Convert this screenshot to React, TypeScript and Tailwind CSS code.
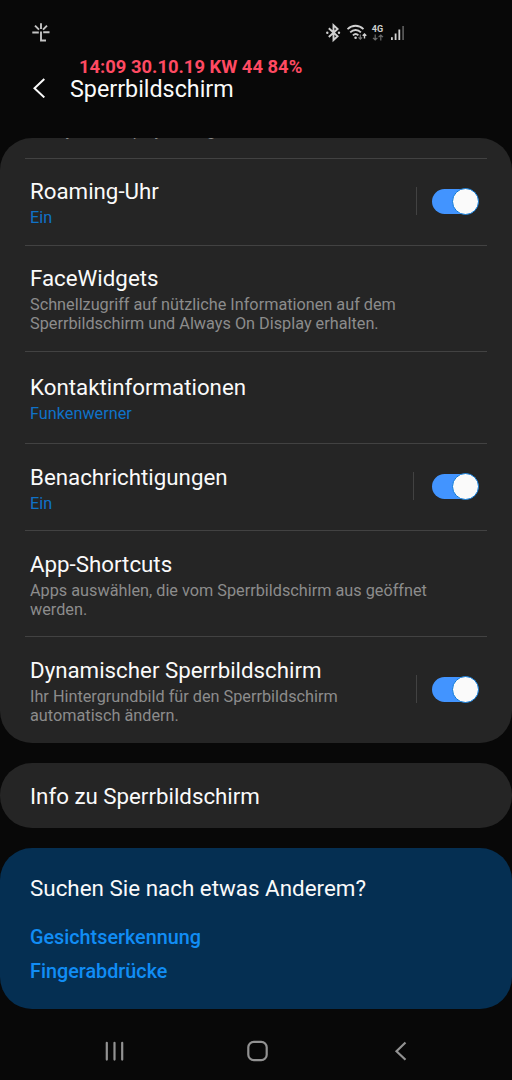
import type { ReactNode } from "react";

const StatusBar = () => {
    return (
        <div className="flex h-[57px] justify-between pt-[22px] pl-[31px] pr-[106px]">
            <svg width="20" height="20" viewBox="0 0 20 20" fill="none" stroke="#c4c4c4" strokeWidth="1.9">
                <path d="M10 1.2v5.8M4 3.7l4 4M16 3.7l-4 4M1.3 10.5h6.5M12.2 10.3h6.3M10 9.5v9h5" />
            </svg>
            <div className="flex gap-[5px]">
                <svg width="16" height="22" viewBox="0 0 16 22" fill="none" stroke="#d0d0d0" strokeWidth="1.9">
                    <path d="M2.8 6.3l8.800 8-4.100 3.700V3.200l4.100 3.800-8.800 8" />
                    <circle cx="1.3" cy="10.7" r="1.2" fill="#d0d0d0" stroke="none" />
                    <circle cx="13" cy="10.7" r="1.2" fill="#d0d0d0" stroke="none" />
                </svg>
                <svg width="21" height="22" viewBox="0 0 21 22" fill="none" stroke="#d0d0d0" strokeWidth="1.8">
                    <path d="M0.5 7.2c4.6-4.6 11.4-4.6 16 0M3.2 10.4c3.2-3.2 7.6-3.2 10.7 0M5.9 13.3c1.7-1.6 3.9-1.6 5.5 0" />
                    <circle cx="8.6" cy="15.8" r="1.3" fill="#d0d0d0" stroke="none" />
                    <path d="M13.3 12.5v4.5M11.5 15.3l1.8 1.8 1.8-1.8" stroke="#777" strokeWidth="1.2" />
                    <path d="M17.5 16.5v-4.5M15.7 13.8l1.8-1.8 1.8 1.8" strokeWidth="1.4" />
                </svg>
                <div className="-ml-[2px] mr-[2px] flex w-[13px] flex-col items-center">
                    <span className="mt-[2px] text-[9px] leading-[10px] font-bold text-[#d0d0d0]">4G</span>
                    <svg width="12" height="7" viewBox="0 0 12 7" fill="none" stroke="#6b6b6b" strokeWidth="1.2">
                        <path d="M3.2 0.5v5.5M1 3.8l2.2 2.2 2.2-2.2M8.8 6.5V1M6.6 3.2l2.2-2.2 2.2 2.2" />
                    </svg>
                </div>
                <svg width="15" height="22" viewBox="0 0 15 22" fill="#d0d0d0">
                    <rect x="0" y="15.2" width="1.8" height="2.8" />
                    <rect x="3.7" y="11.5" width="1.8" height="6.5" />
                    <rect x="7.4" y="7.5" width="1.8" height="10.5" />
                    <rect x="11.2" y="4" width="1.8" height="14" fill="#555" />
                </svg>
            </div>
        </div>
    )
}

const Toggle = () => {
    return (
        <button role="switch" aria-checked="true" className="mb-[2px] flex h-[25px] w-[46px] items-center justify-end rounded-full bg-[#4294ff]">
            <span className="-mr-px size-[27px] shrink-0 rounded-full border border-[#0b79d9] bg-[#fafafa]" />
        </button>
    )
}

type RowProps = {
    title: string;
    height: string;
    sub: ReactNode;
    active?: boolean;
    toggle?: boolean;
    toggleGap?: string;
    pad?: string;
}

const Row = ({ title, height, sub, active, toggle, toggleGap = "gap-[15px]", pad = "pt-[19px]" }: RowProps) => {
    return (
        <li className={`flex items-start justify-between border-t border-[#424242] pl-[5px] pr-[9px] ${height}`}>
            <div className={pad}>
                <h2 className="text-[22.3px] leading-[26px] whitespace-nowrap text-[#fafafa]">{title}</h2>
                <p className={`mt-[4px] text-[16.25px] leading-[19px] whitespace-nowrap ${active ? "text-[#0f72c8]" : "text-[#8c8c8c]"}`}>{sub}</p>
            </div>
            {toggle && (
                <div className={`flex h-full items-center ${toggleGap}`}>
                    <span className="mb-[2px] h-[28px] w-px bg-[#424242]" />
                    <Toggle />
                </div>
            )}
        </li>
    )
}

const App = () => {
    return (
        <div className="flex h-[1080px] w-[512px] flex-col overflow-hidden bg-[#080808] font-[Roboto,sans-serif]">
            <StatusBar />
            <header className="flex h-[81px] items-start pl-[32px]">
                <svg className="mt-[21px]" width="15" height="20" viewBox="0 0 15 20" fill="none" stroke="#fafafa" strokeWidth="2">
                    <path d="M12.3 1L2.5 10.2l9.8 9.2" />
                </svg>
                <div className="pl-[23px]">
                    <p className="pl-[9px] text-[18.4px] leading-[20px] font-bold whitespace-nowrap text-[#ff4a62]">14:09 30.10.19 KW 44 84%</p>
                    <h1 className="-mt-px text-[23.3px] leading-[27px] whitespace-nowrap text-[#fafafa]">Sperrbildschirm</h1>
                </div>
            </header>

            <main className="flex flex-col gap-[20px]">
                <section className="h-[605px] overflow-hidden rounded-[32px] bg-[#252525] px-[25px]">
                    <div className="flex h-[20px] items-start pl-[5px]">
                        <p className="-mt-[17px] text-[16.25px] leading-[19px] text-[#8c8c8c]">Always On Display festlegen.</p>
                    </div>
                    <ul>
                        <Row title="Roaming-Uhr" height="h-[87px]" sub="Ein" active toggle />
                        <Row
                            title="FaceWidgets"
                            height="h-[106px]"
                            sub={<>Schnellzugriff auf nützliche Informationen auf dem<br />Sperrbildschirm und Always On Display erhalten.</>}
                        />
                        <Row title="Kontaktinformationen" height="h-[92px]" sub="Funkenwerner" active pad="pt-[22px]" />
                        <Row title="Benachrichtigungen" height="h-[87px]" sub="Ein" active toggle toggleGap="gap-[18px]" pad="pt-[20px]" />
                        <Row
                            title="App-Shortcuts"
                            height="h-[106px]"
                            sub={<>Apps auswählen, die vom Sperrbildschirm aus geöffnet<br />werden.</>}
                            pad="pt-[20px]"
                        />
                        <Row
                            title="Dynamischer Sperrbildschirm"
                            height="h-[107px]"
                            sub={<>Ihr Hintergrundbild für den Sperrbildschirm<br />automatisch ändern.</>}
                            toggle
                            pad="pt-[20px]"
                        />
                    </ul>
                </section>

                <section className="flex h-[65px] items-center rounded-[32px] bg-[#252525] px-[30px]">
                    <h2 className="text-[22.3px] leading-[26px] text-[#fafafa]">Info zu Sperrbildschirm</h2>
                </section>

                <section className="flex h-[161px] flex-col rounded-[32px] bg-[#052f52] px-[30px] pt-[27px]">
                    <h2 className="text-[22.4px] leading-[26px] text-[#fafafa]">Suchen Sie nach etwas Anderem?</h2>
                    <a className="mt-[25px] text-[19.8px] leading-[24px] font-medium text-[#118df5]">Gesichtserkennung</a>
                    <a className="mt-[10px] text-[19.8px] leading-[24px] font-medium text-[#118df5]">Fingerabdrücke</a>
                </section>
            </main>

            <nav className="flex grow items-center pt-[13px] pl-[105px]">
                <svg width="20" height="20" viewBox="0 0 20 20" stroke="#929292" strokeWidth="2.2" strokeLinecap="round">
                    <path d="M1.8 1.8v16.8M9.5 1.8v16.8M17.2 1.8v16.8" />
                </svg>
                <svg className="ml-[122px]" width="22" height="22" viewBox="0 0 22 22" fill="none" stroke="#929292" strokeWidth="2.2">
                    <rect x="1.3" y="1.8" width="18.4" height="18.4" rx="5.5" />
                </svg>
                <svg className="ml-[125px]" width="14" height="20" viewBox="0 0 14 20" fill="none" stroke="#929292" strokeWidth="2.2">
                    <path d="M11.5 1.5L2.5 10.2l9 8.5" />
                </svg>
            </nav>
        </div>
    )
}

export default App;
